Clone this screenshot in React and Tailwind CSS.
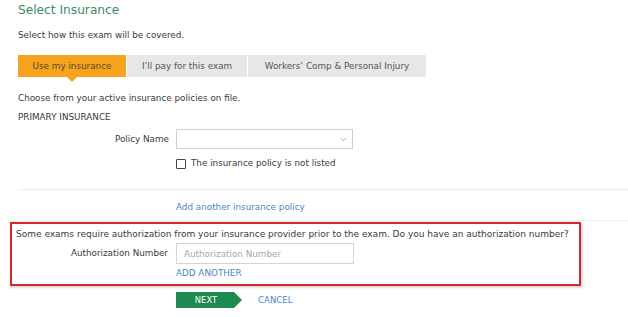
import { ChevronDown } from 'lucide-react';

export default function App() {
  const tabs = [
    { label: 'Use my insurance', width: 'w-[108px]', active: true },
    { label: 'I\u2019ll pay for this exam', width: 'w-[120px]' },
    { label: 'Workers\u2019 Comp & Personal Injury', width: 'w-[178px]' },
  ];

  return (
    <div className="w-[628px] h-[317px] overflow-hidden bg-white font-['DejaVu_Sans',sans-serif] text-[8.8px] leading-[11px] text-[#3a3a3a]">
      <div className="pl-[18px] pt-[3px]">
        {/* Header */}
        <h1 className="text-[12.2px] leading-[15px] text-[#3a8c64]">Select Insurance</h1>
        <p className="mt-[12px]">Select how this exam will be covered.</p>

        {/* Tabs */}
        <div className="mt-[14px] flex gap-px">
          {tabs.map((tab) => (
            <div
              key={tab.label}
              className={`relative flex h-[22px] items-center justify-center ${tab.width} ${
                tab.active ? 'bg-[#f6a31f] text-[#5a4a2c]' : 'bg-[#e7e7e7] text-[#555]'
              }`}
            >
              {tab.label}
              {tab.active && (
                <span className="absolute left-1/2 top-full -translate-x-1/2 border-x-[5px] border-t-[5px] border-x-transparent border-t-[#f6a31f]" />
              )}
            </div>
          ))}
        </div>

        <p className="mt-[15.5px]">Choose from your active insurance policies on file.</p>
        <p className="mt-[8px]">PRIMARY INSURANCE</p>

        {/* Policy name */}
        <div className="mt-[6.5px] flex items-center">
          <span className="w-[158px] shrink-0 pr-[7px] text-right">Policy Name</span>
          <div className="flex h-[20px] w-[177px] items-center justify-end border border-[#cfcfcf] pr-[4px]">
            <ChevronDown size={9} strokeWidth={1.5} className="text-[#666]" />
          </div>
        </div>
        <div className="mt-[9px] flex items-center pl-[158px]">
          <span className="h-[10px] w-[10px] rounded-[1px] border border-[#444]" />
          <span className="ml-[5px]">The insurance policy is not listed</span>
        </div>

        <div className="mt-[20px] h-px bg-[#ececec]" />
        <a className="mt-[11.5px] block pl-[158px] text-[#4a86c6]">Add another insurance policy</a>
        <div className="mt-[7.5px] h-px bg-[#efefef]" />

        {/* Authorization */}
        <div className="ml-[-8px] mt-[1px] w-[571px] border-2 border-[#d7262b] px-[4px] pb-[5.5px] pt-[4.5px] shadow-[1px_1px_3px_rgba(0,0,0,0.25)]">
          <p className="text-[9px]">Some exams require authorization from your insurance provider prior to the exam. Do you have an authorization number?</p>
          <div className="mt-[3.5px] flex items-center">
            <span className="w-[160px] shrink-0 pr-[8px] text-right">Authorization Number</span>
            <input
              placeholder="Authorization Number"
              className="h-[21px] w-[178px] border border-[#d4d4d4] px-[7px] text-[8.8px] outline-none placeholder:text-[#a8a8a8]"
            />
          </div>
          <a className="mt-[3.5px] block pl-[160px] text-[#4a86c6]">ADD ANOTHER</a>
        </div>

        {/* Actions */}
        <div className="ml-[158px] mt-[6px] flex items-center gap-[16px]">
          <button className="flex h-[16px] w-[66px] items-center justify-center bg-[#1f8a4f] pr-[6px] text-[8.4px] text-white [clip-path:polygon(0_0,58px_0,100%_50%,58px_100%,0_100%)]">
            NEXT
          </button>
          <a className="text-[8.6px] text-[#4a86c6]">CANCEL</a>
        </div>
      </div>
    </div>
  );
}
